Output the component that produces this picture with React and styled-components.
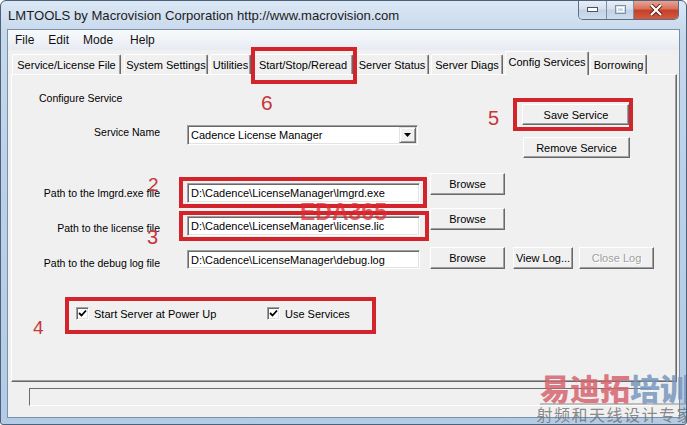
import styled, { createGlobalStyle, css } from 'styled-components';

const GlobalStyle = createGlobalStyle`
  html, body { margin: 0; padding: 0; background: #fff; }
  body { font-family: "Liberation Sans", Arial, sans-serif; }
  * { box-sizing: border-box; }
`;

const RED = '#d3232b';

// red annotation frame drawn over a control
const marked = css`
  position: relative;
  &::after {
    content: '';
    position: absolute;
    inset: ${(p) => p.$mark};
    border: 4px solid ${RED};
    pointer-events: none;
    z-index: 5;
  }
`;

const Frame = styled.div`
  position: relative;
  width: 687px;
  height: 425px;
  overflow: hidden;
  display: flex;
  flex-direction: column;
  border: 1px solid #4d6179;
  border-radius: 6px 6px 3px 3px;
  background: linear-gradient(180deg, #dbe7f4 0%, #c6d8ec 8%, #bcd1e9 40%, #b4cbe5 100%);
`;

const TitleBar = styled.div`
  height: 28px;
  display: flex;
  align-items: flex-start;
  padding-left: 7px;
`;

const Title = styled.div`
  margin-top: 7px;
  font-size: 13.1px;
  color: #1c1c1c;
  white-space: nowrap;
`;

const Controls = styled.div`
  margin-left: auto;
  margin-right: 7px;
  margin-top: -1px;
  display: flex;
  height: 20px;
  border: 1px solid #5b6e86;
  border-top: none;
  border-radius: 0 0 5px 5px;
  overflow: hidden;
`;

const Ctl = styled.div`
  width: ${(p) => p.$w}px;
  display: flex;
  align-items: center;
  justify-content: center;
  border-left: ${(p) => (p.$first ? 'none' : '1px solid #7d8fa6')};
  background: ${(p) =>
    p.$close
      ? 'linear-gradient(180deg, #e9a99b 0%, #d9735f 45%, #c7402a 55%, #d25a3f 100%)'
      : 'linear-gradient(180deg, #eaf0f7 0%, #d6e1ee 45%, #c2d2e5 55%, #cfdcec 100%)'};
`;

const Client = styled.div`
  flex: 1;
  margin: 0 6px 6px 6px;
  border: 1px solid #7b8fa8;
  background: #f0f0f0;
  display: flex;
  flex-direction: column;
`;

const MenuBar = styled.div`
  height: 20px;
  display: flex;
  align-items: center;
  background: linear-gradient(180deg, #f8fafc 0%, #eef2f7 60%, #e6ebf2 100%);
  font-size: 12px;
  color: #111;
`;

const MenuItem = styled.span`
  padding: 0 ${(p) => p.$pad}px 0 7px;
`;

const TabStrip = styled.div`
  height: 24px;
  display: flex;
  align-items: flex-end;
  padding-left: 4px;
  position: relative;
  z-index: 2;
`;

const Tab = styled.div`
  width: ${(p) => p.$w}px;
  margin-left: ${(p) => p.$gap}px;
  height: ${(p) => (p.$active ? 24 : 20)}px;
  margin-bottom: ${(p) => (p.$active ? -1 : 0)}px;
  display: flex;
  align-items: center;
  justify-content: center;
  padding-bottom: ${(p) => (p.$active ? 4 : 0)}px;
  font-size: 11px;
  color: #000;
  white-space: nowrap;
  background: #f0f0f0;
  border-top: 1px solid #fff;
  border-left: 1px solid #fff;
  border-right: 1px solid #696969;
  box-shadow: inset -1px 0 0 #a0a0a0;
  border-radius: 2px 2px 0 0;
  ${(p) => p.$mark && marked}
`;

const Panel = styled.div`
  height: 308px;
  margin: 0 2px 0 3px;
  border-top: 1px solid #fff;
  border-left: 1px solid #fff;
  border-right: 1px solid #696969;
  border-bottom: 1px solid #696969;
  box-shadow: inset -1px -1px 0 #a0a0a0;
  display: flex;
  flex-direction: column;
`;

const Row = styled.div`
  height: ${(p) => p.$h}px;
  margin-top: ${(p) => p.$mt || 0}px;
  display: flex;
  align-items: flex-start;
`;

const Heading = styled.div`
  margin: 16px 0 0 27px;
  font-size: 10.5px;
  line-height: 14px;
  color: #000;
`;

const Label = styled.div`
  width: 148px;
  margin-top: ${(p) => p.$mt}px;
  text-align: right;
  font-size: 10.5px;
  line-height: 13px;
  color: #000;
  white-space: nowrap;
`;

const sunken = css`
  background: #fff;
  border-top: 1px solid #a0a0a0;
  border-left: 1px solid #a0a0a0;
  border-right: 1px solid #fff;
  border-bottom: 1px solid #fff;
  box-shadow: inset 1px 1px 0 #696969, inset -1px -1px 0 #e3e3e3;
`;

const Field = styled.div`
  ${sunken};
  width: ${(p) => p.$w || 233}px;
  height: ${(p) => p.$h || 20}px;
  margin: ${(p) => p.$mt}px 0 0 27px;
  padding-left: 3px;
  display: flex;
  align-items: center;
  font-size: 11px;
  color: #000;
  white-space: nowrap;
  ${(p) => p.$mark && marked}
`;

const ComboArrow = styled.div`
  margin-left: auto;
  margin-right: 1px;
  width: 17px;
  height: 16px;
  background: #f0f0f0;
  border-top: 1px solid #e3e3e3;
  border-left: 1px solid #e3e3e3;
  border-right: 1px solid #696969;
  border-bottom: 1px solid #696969;
  box-shadow: inset 1px 1px 0 #fff, inset -1px -1px 0 #a0a0a0;
  display: flex;
  align-items: center;
  justify-content: center;
`;

const Button = styled.div`
  width: ${(p) => p.$w}px;
  height: ${(p) => p.$h || 22}px;
  margin-top: ${(p) => p.$mt || 0}px;
  margin-left: ${(p) => p.$ml || 0}px;
  margin-right: ${(p) => p.$mr || 0}px;
  display: flex;
  align-items: center;
  justify-content: center;
  background: #f0f0f0;
  border-top: 1px solid #fff;
  border-left: 1px solid #fff;
  border-right: 1px solid #696969;
  border-bottom: 1px solid #696969;
  box-shadow: inset -1px -1px 0 #a0a0a0;
  font-size: 11px;
  white-space: nowrap;
  color: ${(p) => (p.$disabled ? '#a0a0a0' : '#000')};
  text-shadow: ${(p) => (p.$disabled ? '1px 1px 0 #fff' : 'none')};
  ${(p) => p.$mark && marked}
`;

const CheckGroup = styled.div`
  width: 288px;
  margin: 38px 0 0 64px;
  display: flex;
  align-items: center;
  ${marked}
`;

const CheckItem = styled.label`
  width: ${(p) => p.$w}px;
  display: flex;
  align-items: center;
  gap: 5px;
  font-size: 11px;
  color: #000;
  white-space: nowrap;
`;

const Box = styled.span`
  ${sunken};
  width: 13px;
  height: 13px;
  display: flex;
  align-items: center;
  justify-content: center;
`;

const StatusArea = styled.div`
  flex: 1;
  padding: 6px 0 0 21px;
`;

const StatusField = styled.div`
  width: 623px;
  height: 18px;
  border-top: 1px solid #6d6d6d;
  border-left: 1px solid #6d6d6d;
  border-right: 1px solid #fff;
  border-bottom: 1px solid #fff;
`;

const Note = styled.div`
  position: absolute;
  left: ${(p) => p.$x}px;
  top: ${(p) => p.$y}px;
  font-size: ${(p) => p.$size || 21}px;
  line-height: 1;
  color: #c7363a;
  z-index: 6;
`;

const Watermark = styled.div`
  position: absolute;
  left: 299px;
  top: 200px;
  font-size: 23px;
  font-weight: bold;
  line-height: 1;
  color: rgba(220, 45, 50, 0.75);
  z-index: 6;
`;

const Brand = styled.div`
  position: absolute;
  right: -8px;
  bottom: 0;
  display: flex;
  flex-direction: column;
  align-items: flex-end;
  z-index: 6;
  font-family: "Noto Sans CJK SC", sans-serif;
`;

const BrandBig = styled.div`
  font-size: 30px;
  font-weight: 900;
  line-height: 31px;
  border-bottom: 2px solid rgba(140, 140, 140, 0.5);
  padding-right: 4px;
`;

const BrandPart = styled.span`
  color: ${(p) => p.$c};
`;

const BrandSmall = styled.div`
  font-size: 16px;
  line-height: 19px;
  color: rgba(110, 110, 110, 0.8);
  letter-spacing: 1.5px;
`;

const Check = () => (
  <svg width="9" height="9" viewBox="0 0 9 9">
    <path d="M1 4 L3.5 6.5 L8 1.5" stroke="#000" strokeWidth="1.8" fill="none" />
  </svg>
);

const tabs = [
  ['Service/License File', 109, 0],
  ['System Settings', 84, 3],
  ['Utilities', 41, 2],
  ['Start/Stop/Reread', 100, 2],
  ['Server Status', 74, 2],
  ['Server Diags', 72, 2],
  ['Config Services', 84, 2],
  ['Borrowing', 57, 1],
];

export default function App() {
  return (
    <>
      <GlobalStyle />
      <Frame>
        <TitleBar>
          <Title>LMTOOLS by Macrovision Corporation http://www.macrovision.com</Title>
          <Controls>
            <Ctl $w={27} $first>
              <svg width="11" height="5" viewBox="0 0 11 5">
                <rect x="0.5" y="0.5" width="10" height="4" fill="#fff" stroke="#44556b" />
              </svg>
            </Ctl>
            <Ctl $w={27}>
              <svg width="11" height="9" viewBox="0 0 11 9">
                <rect x="0.5" y="0.5" width="10" height="8" fill="none" stroke="#7f90a6" />
                <rect x="2.5" y="2.5" width="6" height="4" fill="none" stroke="#ffffff" />
              </svg>
            </Ctl>
            <Ctl $w={45} $close>
              <svg width="14" height="12" viewBox="0 0 14 12">
                <path d="M2 1 L12 11 M12 1 L2 11" stroke="#5a2018" strokeWidth="4" />
                <path d="M2 1 L12 11 M12 1 L2 11" stroke="#fff" strokeWidth="2.2" />
              </svg>
            </Ctl>
          </Controls>
        </TitleBar>
        <Client>
          <MenuBar>
            <MenuItem $pad={7}>File</MenuItem>
            <MenuItem $pad={7}>Edit</MenuItem>
            <MenuItem $pad={10}>Mode</MenuItem>
            <MenuItem $pad={7}>Help</MenuItem>
          </MenuBar>
          <TabStrip>
            {tabs.map(([t, w, g]) => (
              <Tab
                key={t}
                $w={w}
                $gap={g}
                $active={t === 'Config Services'}
                $mark={t === 'Start/Stop/Reread' ? '-8px -5px -10px -3px' : undefined}
              >
                {t}
              </Tab>
            ))}
          </TabStrip>
          <Panel>
            <Row $h={50}>
              <Heading>Configure Service</Heading>
              <Button $w={107} $h={21} $mt={29} $ml={400} $mark="-7px -5px -7px -10px">
                Save Service
              </Button>
            </Row>
            <Row $h={35}>
              <Label $mt={1}>Service Name</Label>
              <Field $w={231} $mt={0}>
                Cadence License Manager
                <ComboArrow>
                  <svg width="7" height="4" viewBox="0 0 7 4">
                    <path d="M0 0 H7 L3.5 4 Z" fill="#000" />
                  </svg>
                </ComboArrow>
              </Field>
              <Button $w={107} $h={21} $mt={12} $ml={105}>
                Remove Service
              </Button>
            </Row>
            <Row $h={35} $mt={13}>
              <Label $mt={14}>Path to the lmgrd.exe file</Label>
              <Field $mt={10} $mark="-7px -8px -6px -9px">
                D:\Cadence\LicenseManager\lmgrd.exe
              </Field>
              <Button $w={75} $ml={10}>Browse</Button>
            </Row>
            <Row $h={39}>
              <Label $mt={14}>Path to the license file</Label>
              <Field $mt={8} $mark="-6px -10px -6px -9px">
                D:\Cadence\LicenseManager\license.lic
              </Field>
              <Button $w={75} $ml={10}>Browse</Button>
            </Row>
            <Row $h={22}>
              <Label $mt={10}>Path to the debug log file</Label>
              <Field $mt={3} $h={19}>D:\Cadence\LicenseManager\debug.log</Field>
              <Button $w={75} $ml={10}>Browse</Button>
              <Button $w={60} $ml={8}>View Log...</Button>
              <Button $w={75} $ml={6} $disabled>Close Log</Button>
            </Row>
            <CheckGroup $mark="-10px -12px -14px -11px">
              <CheckItem $w={191}>
                <Box><Check /></Box>
                Start Server at Power Up
              </CheckItem>
              <CheckItem $w={97}>
                <Box><Check /></Box>
                Use Services
              </CheckItem>
            </CheckGroup>
          </Panel>
          <StatusArea>
            <StatusField />
          </StatusArea>
        </Client>

        <Note $x={260} $y={91}>6</Note>
        <Note $x={487} $y={107} $size={20}>5</Note>
        <Note $x={147} $y={174} $size={19}>2</Note>
        <Note $x={146} $y={226} $size={20}>3</Note>
        <Note $x={32} $y={317} $size={19}>4</Note>
        <Watermark>EDA365</Watermark>
        <Brand>
          <BrandBig>
            <BrandPart $c="rgba(214, 100, 110, 0.85)">易迪拓</BrandPart>
            <BrandPart $c="rgba(120, 150, 190, 0.85)">培训</BrandPart>
          </BrandBig>
          <BrandSmall>射频和天线设计专家</BrandSmall>
        </Brand>
      </Frame>
    </>
  );
}
